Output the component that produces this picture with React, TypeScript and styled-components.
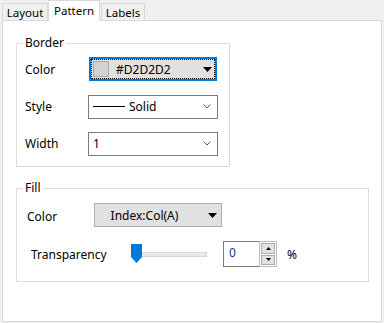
import React from "react"
import styled, { createGlobalStyle } from "styled-components"

const GlobalStyle = createGlobalStyle`
  html, body {
    margin: 0;
    padding: 0;
    background: #f0f0f0;
  }
  body {
    font-family: "Noto Sans", "Open Sans", sans-serif;
    font-size: 11px;
    color: #000;
  }
`

const Window = styled.div`
  box-sizing: border-box;
  width: 384px;
  height: 323px;
  padding: 0 2px 1px 2px;
  display: flex;
  flex-direction: column;
`

const TabBar = styled.div`
  display: flex;
  align-items: flex-end;
  height: 20px;
  flex: none;
`

const Tab = styled.div<{ $active?: boolean; $w: number; $ml?: number }>`
  box-sizing: border-box;
  width: ${(p) => p.$w}px;
  height: ${(p) => (p.$active ? 21 : 17)}px;
  margin-left: ${(p) => p.$ml || 0}px;
  margin-bottom: ${(p) => (p.$active ? -1 : 0)}px;
  border: 1px solid #d9d9d9;
  border-bottom: none;
  background: ${(p) => (p.$active ? "#fff" : "#f0f0f0")};
  display: flex;
  align-items: center;
  justify-content: center;
  padding-bottom: ${(p) => (p.$active ? 2 : 0)}px;
  font-size: 11.5px;
  position: relative;
  z-index: ${(p) => (p.$active ? 1 : 0)};
`

const Panel = styled.div`
  flex: 1;
  background: #fff;
  border: 1px solid #d9d9d9;
  padding: 14px 0 0 13px;
  display: flex;
  flex-direction: column;
  align-items: flex-start;
`

const Group = styled.fieldset<{ $w: number; $h: number; $mt?: number; $pt: number }>`
  box-sizing: border-box;
  width: ${(p) => p.$w}px;
  height: ${(p) => p.$h}px;
  margin: ${(p) => p.$mt || 0}px 0 0 0;
  padding: ${(p) => p.$pt}px 0 0 8px;
  border: 1px solid #dcdcdc;
  min-width: 0;
`

const Legend = styled.legend`
  padding: 0 2px;
  margin-left: -2px;
  line-height: 16px;
  font-size: 12px;
`

const Rows = styled.div<{ $gap: number }>`
  display: flex;
  flex-direction: column;
  gap: ${(p) => p.$gap}px;
`

const Row = styled.div<{ $h: number }>`
  display: flex;
  align-items: center;
  height: ${(p) => p.$h}px;
`

const Label = styled.div<{ $w: number; $ml?: number; $dy?: number }>`
  width: ${(p) => p.$w}px;
  margin-left: ${(p) => p.$ml || 0}px;
  padding-top: ${(p) => p.$dy || 0}px;
  font-size: 12px;
  flex: none;
`

const ColorButton = styled.div<{ $focused?: boolean; $w: number; $ml?: number }>`
  box-sizing: border-box;
  width: ${(p) => p.$w}px;
  height: 24px;
  margin-left: ${(p) => p.$ml || 0}px;
  background: #e1e1e1;
  border: ${(p) => (p.$focused ? "2px solid #0078d7" : "1px solid #adadad")};
  outline: ${(p) => (p.$focused ? "1px dotted #000" : "none")};
  outline-offset: -3px;
  display: flex;
  align-items: center;
  padding: 0 ${(p) => (p.$focused ? 3 : 4)}px 0 2px;
  font-size: 12px;
`

const Swatch = styled.div<{ $color: string }>`
  box-sizing: border-box;
  width: 16px;
  height: 16px;
  background: ${(p) => p.$color};
  border: 1px solid #a8a8a8;
  margin-right: 7px;
  flex: none;
`

const ButtonText = styled.span<{ $center?: boolean }>`
  flex: 1;
  text-align: ${(p) => (p.$center ? "center" : "left")};
  padding-right: ${(p) => (p.$center ? 16 : 0)}px;
`

const Combo = styled.div`
  box-sizing: border-box;
  width: 130px;
  height: 24px;
  border: 1px solid #7a7a7a;
  background: #fff;
  display: flex;
  align-items: center;
  padding: 0 6px 0 4px;
  font-size: 12px;
`

const LineSample = styled.span`
  width: 32px;
  height: 1px;
  background: #000;
  margin-right: 4px;
  flex: none;
`

const ComboText = styled.span`
  flex: 1;
`

const SliderWrap = styled.div`
  width: 76px;
  height: 20px;
  margin-right: 16px;
  display: flex;
  align-items: center;
  position: relative;
  flex: none;
`

const Track = styled.div`
  box-sizing: border-box;
  width: 100%;
  height: 5px;
  background: #e7eaea;
  border: 1px solid #d6d6d6;
`

const Thumb = styled.svg`
  position: absolute;
  left: 0;
  top: 0;
`

const Spin = styled.div`
  display: flex;
  height: 26px;
  width: 54px;
  flex: none;
`

const SpinInput = styled.div`
  box-sizing: border-box;
  flex: 1;
  border: 1px solid #7a7a7a;
  border-right: none;
  padding: 2px 0 0 5px;
  font-size: 12px;
  color: #0b3d91;
  background: #fff;
`

const SpinButtons = styled.div`
  box-sizing: border-box;
  width: 18px;
  border: 1px solid #bcbcbc;
  padding: 1px;
  display: flex;
  flex-direction: column;
  gap: 1px;
  background: #fff;
`

const SpinButton = styled.div`
  flex: 1;
  background: #e1e1e1;
  border: 1px solid #adadad;
  display: flex;
  align-items: center;
  justify-content: center;
`

const Unit = styled.span`
  margin-left: 10px;
  font-size: 12px;
`

const Arrow = () => (
  <svg width="9" height="5" viewBox="0 0 9 5">
    <path d="M0 0 H9 L4.5 5 Z" fill="#000" />
  </svg>
)

const Chevron = () => (
  <svg width="8" height="5" viewBox="0 0 8 5">
    <path d="M0.5 0.5 L4 4 L7.5 0.5" fill="none" stroke="#555" strokeWidth="1" />
  </svg>
)

const SmallTri = ({ up }: { up?: boolean }) => (
  <svg width="5" height="3" viewBox="0 0 5 3">
    <path d={up ? "M0 3 H5 L2.5 0 Z" : "M0 0 H5 L2.5 3 Z"} fill="#000" />
  </svg>
)

export default function App() {
  return (
    <>
      <GlobalStyle />
      <Window>
        <TabBar>
          <Tab $w={46}>Layout</Tab>
          <Tab $w={52} $active>
            Pattern
          </Tab>
          <Tab $w={44} $ml={1}>
            Labels
          </Tab>
        </TabBar>
        <Panel>
          <Group $w={214} $h={132} $pt={6}>
            <Legend>Border</Legend>
            <Rows $gap={14}>
              <Row $h={24}>
                <Label $w={63}>Color</Label>
                <ColorButton $focused $w={128} $ml={1}>
                  <Swatch $color="#d2d2d2" />
                  <ButtonText>#D2D2D2</ButtonText>
                  <Arrow />
                </ColorButton>
              </Row>
              <Row $h={23}>
                <Label $w={63}>Style</Label>
                <Combo>
                  <LineSample />
                  <ComboText>Solid</ComboText>
                  <Chevron />
                </Combo>
              </Row>
              <Row $h={23}>
                <Label $w={63}>Width</Label>
                <Combo>
                  <ComboText>1</ComboText>
                  <Chevron />
                </Combo>
              </Row>
            </Rows>
          </Group>

          <Group $w={353} $h={102} $mt={13} $pt={7}>
            <Legend>Fill</Legend>
            <Rows $gap={14}>
              <Row $h={24}>
                <Label $w={67} $ml={2} $dy={3}>
                  Color
                </Label>
                <ColorButton $w={128}>
                  <ButtonText $center>Index:Col(A)</ButtonText>
                  <Arrow />
                </ColorButton>
              </Row>
              <Row $h={26}>
                <Label $w={100} $ml={6}>
                  Transparency
                </Label>
                <SliderWrap>
                  <Track />
                  <Thumb width="11" height="19" viewBox="0 0 11 19">
                    <path d="M0 0 H11 V13 L5.5 19 L0 13 Z" fill="#0078d7" />
                  </Thumb>
                </SliderWrap>
                <Spin>
                  <SpinInput>0</SpinInput>
                  <SpinButtons>
                    <SpinButton>
                      <SmallTri up />
                    </SpinButton>
                    <SpinButton>
                      <SmallTri />
                    </SpinButton>
                  </SpinButtons>
                </Spin>
                <Unit>%</Unit>
              </Row>
            </Rows>
          </Group>
        </Panel>
      </Window>
    </>
  )
}
